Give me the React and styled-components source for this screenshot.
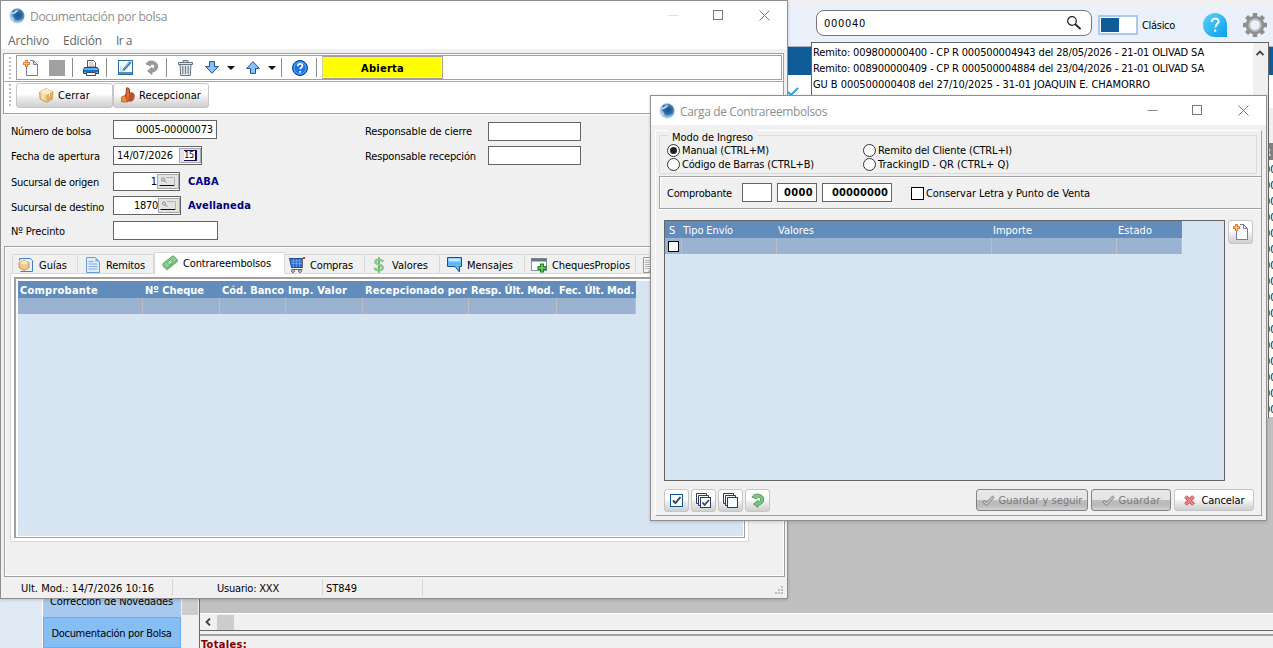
import { useLayoutEffect, useRef, useState } from 'react';
import styled, { createGlobalStyle, css } from 'styled-components';

const GlobalStyle = createGlobalStyle`
  * { box-sizing: border-box; }
  body {
    margin: 0;
    overflow: hidden;
    font-family: "DejaVu Sans Condensed", "DejaVu Sans", sans-serif;
    font-size: 11px;
    color: #000;
  }
  svg { display: block; flex: none; }
`;

const TextSpan = styled.span`
  display: inline-block;
  flex: none;
  white-space: pre;
  line-height: 16px;
  margin: 1px 0 -1px ${(p) => p.$ml || 0}px;
  font-size: ${(p) => p.$size || 11}px;
  font-weight: ${(p) => (p.$bold ? 700 : 400)};
  font-stretch: ${(p) => (p.$ui ? 'normal' : 'condensed')};
  font-family: ${(p) => (p.$ui ? '"Open Sans", sans-serif' : '"DejaVu Sans Condensed", "DejaVu Sans", sans-serif')};
  color: ${(p) => p.$color || 'inherit'};
`;

// text whose tracking is adjusted so it takes exactly w pixels
function Text({ w, children, bold, ui, size, color, ml }) {
  const ref = useRef(null);
  const [spacing, setSpacing] = useState(0);
  useLayoutEffect(() => {
    if (!w) return;
    const natural = ref.current.getBoundingClientRect().width;
    setSpacing((w - natural) / String(children).length);
  }, []);
  return (
    <TextSpan ref={ref} $bold={bold} $ui={ui} $size={size} $color={color} $ml={ml} style={{ letterSpacing: spacing }}>
      {children}
    </TextSpan>
  );
}

/* ---------- desktop behind the windows ---------- */

const Desktop = styled.div`
  position: relative;
  width: 1273px;
  height: 648px;
  overflow: hidden;
  display: flex;
  flex-direction: column;
  background: #f0f0f0;
`;

const Header = styled.div`
  height: 42px;
  margin-top: 5px;
  padding-left: 816px;
  display: flex;
  align-items: flex-start;
  background: #eaf1fb;
  border-bottom: 1px solid #a5b6c6;
  flex: none;
`;

const SearchBox = styled.div`
  width: 276px;
  height: 26px;
  margin-top: 5px;
  padding: 0 10px 0 7px;
  display: flex;
  align-items: center;
  justify-content: space-between;
  border: 1px solid #777;
  border-radius: 8px;
  background: #fff;
`;

const Toggle = styled.div`
  width: 40px;
  height: 20px;
  margin: 10px 4px 0 6px;
  padding: 1px;
  border: 2px solid #a9c9ee;
  background: #fff;
  &::before {
    content: '';
    display: block;
    width: 18px;
    height: 14px;
    background: #0f5c99;
  }
`;

const HeaderSlot = styled.div`
  margin: ${(p) => p.$mt}px 0 0 ${(p) => p.$ml || 0}px;
`;

const BlueBar = styled.div`
  height: 28px;
  flex: none;
  background: #0f5c99;
`;

const Content = styled.div`
  flex: 1;
  min-height: 0;
  display: flex;
`;

const NavGutter = styled.div`
  width: 43px;
  background: #e0eaf4;
  border-right: 1px solid #fff;
`;

const Nav = styled.div`
  width: 138px;
  display: flex;
  flex-direction: column;
  justify-content: flex-end;
  background: #a7c9f0;
`;

const NavItem = styled.div`
  height: ${(p) => (p.$active ? 31 : 32)}px;
  padding-right: 1px;
  display: flex;
  align-items: center;
  justify-content: center;
  background: ${(p) => (p.$active ? '#86bef4' : '#a7c9f0')};
  border: ${(p) => (p.$active ? '1px solid #67adf0' : '0')};
`;

const NavScroll = styled.div`
  width: 18px;
  padding: 0 1px 0 1px;
  background: #f0f0f0;
  &::before {
    content: '';
    display: block;
    height: 540px;
    background: #cdcdcd;
  }
`;

const Main = styled.div`
  flex: 1;
  min-width: 0;
  display: flex;
  flex-direction: column;
  border-left: 1px solid #696969;
  background: #f0f0f0;
`;

const BackGrid = styled.div`
  height: 538px;
  flex: none;
  background: #c0c0c0;
  display: flex;
  justify-content: flex-end;
  align-items: flex-start;
`;

const BackRows = styled.div`
  width: 120px;
  height: 342px;
  background: #fff;
`;

const BackRow = styled.div`
  height: 16px;
  line-height: 20px;
  overflow: hidden;
  display: flex;
  justify-content: flex-end;
  width: 120px;
  color: #10203c;
  & > div {
    width: 5px;
    overflow: hidden;
    text-indent: -4px;
  }
`;

const BackHead = styled(BackRow)`
  height: 17px;
  margin-top: 68px;
  background: #808080;
  color: #fff;
`;

const BackPad = styled.div`
  height: 68px;
  background: linear-gradient(#fff 33px, #f0f0f0 33px);
  margin-bottom: -68px;
`;

const BackScroll = styled.div`
  height: 18px;
  flex: none;
  display: flex;
  align-items: center;
  border-top: 1px solid #fff;
  border-bottom: 1px solid #696969;
  &::after {
    content: '';
    width: 17px;
    height: 15px;
    background: #cdcdcd;
  }
`;

const ScrollArrow = styled.div`
  width: 17px;
  padding-right: 1px;
  display: flex;
  justify-content: center;
`;

const Totals = styled.div`
  flex: 1;
  margin-top: 3px;
  border-top: 2px solid #a0a0a0;
  padding-left: 1px;
`;

const TickMark = styled.div`
  position: absolute;
  left: 788px;
  top: 75px;
  width: 23px;
  height: 21px;
  padding-top: 12px;
  background: #fff;
`;

const Dropdown = styled.div`
  position: absolute;
  left: 811px;
  top: 42px;
  width: 458px;
  height: 376px;
  display: flex;
  background: #fff;
  border: 1px solid #646464;
  border-bottom: 0;
`;

const DropdownList = styled.div`
  flex: 1;
  padding: 1px 0 0 1px;
  display: flex;
  flex-direction: column;
  align-items: flex-start;
`;

const DropdownScroll = styled.div`
  width: 15px;
  padding: 6px 3px;
  background: #f0f0f0;
`;

/* ---------- windows ---------- */

const Window = styled.div`
  position: absolute;
  isolation: isolate;
  left: ${(p) => p.$x}px;
  top: ${(p) => p.$y}px;
  width: ${(p) => p.$w}px;
  height: ${(p) => p.$h}px;
  display: flex;
  flex-direction: column;
  background: #f0f0f0;
  border: 1px solid #8f8f8f;
  box-shadow: 0 1px 3px rgba(0, 0, 0, 0.18);
`;

const TitleBar = styled.div`
  height: 29px;
  flex: none;
  display: flex;
  align-items: center;
  padding-left: 8px;
  background: #fff;
`;

const TitleButtons = styled.div`
  margin-left: auto;
  display: flex;
  align-items: center;
  gap: 34px;
  padding-right: 17px;
`;

const MenuBar = styled.div`
  height: 19px;
  flex: none;
  padding-left: 7px;
  display: flex;
  align-items: center;
  background: #fff;
`;

const Toolbars = styled.div`
  height: 61px;
  margin: 4px 3px 0 2px;
  flex: none;
  display: flex;
  flex-direction: column;
  background: #fff;
  border: 1px solid #a0a0a0;
`;

const grip = css`
  &::before {
    content: '';
    width: 2px;
    height: 22px;
    margin: 0 5px 0 5px;
    flex: none;
    background: repeating-linear-gradient(#bdbdbd 0 2px, #fff 2px 4px);
  }
`;

const ToolRow = styled.div`
  height: ${(p) => p.$h}px;
  flex: none;
  display: flex;
  align-items: center;
  ${grip}
  border-bottom: ${(p) => (p.$line ? '1px solid #a7a7af' : '0')};
`;

const ToolFrame = styled.div`
  flex: 1;
  height: 25px;
  margin-right: 1px;
  display: flex;
  align-items: center;
  border: 1px solid #a0a0a0;
`;

const Tool = styled.div`
  width: ${(p) => p.$w}px;
  margin-left: ${(p) => p.$ml}px;
  display: flex;
  justify-content: center;
  flex: none;
`;

const Sep = styled.div`
  width: 1px;
  height: 19px;
  margin-left: ${(p) => p.$ml}px;
  background: #8c8c8c;
`;

const GreyBlock = styled.div`
  width: 16px;
  height: 16px;
  background: #a0a0a0;
`;

const Status = styled.div`
  width: 121px;
  height: 23px;
  margin-left: 5px;
  display: flex;
  align-items: center;
  justify-content: center;
  background: #ff0;
  border: 1px solid #a0a0a0;
  border-left-color: #d0d0a0;
  box-shadow: inset -1px -1px 0 #fff;
`;

const Button = styled.div`
  width: ${(p) => p.$w}px;
  height: ${(p) => p.$h || 23}px;
  flex: none;
  display: flex;
  align-items: center;
  justify-content: center;
  gap: ${(p) => p.$gap || 4}px;
  border: 1px solid ${(p) => (p.$off ? '#858585' : '#c6c6c6')};
  border-radius: 3px;
  background: ${(p) =>
    p.$off
      ? 'linear-gradient(#e8e8e8, #e4e4e4 48%, #bebebe 52%, #b9b9b9 75%, #d2d2d2)'
      : 'linear-gradient(#fff, #fdfdfd 45%, #ececec 60%, #cfcfcf)'};
`;

const Form = styled.div`
  height: 132px;
  flex: none;
  display: flex;
  margin: 0 2px 0 3px;
  border-top: 1px solid #fff;
  padding: 5px 0 0 7px;
  align-items: flex-start;
`;

const FormColumn = styled.div`
  width: ${(p) => p.$w}px;
  display: flex;
  flex-direction: column;
`;

const Field = styled.div`
  height: 19px;
  margin-top: ${(p) => p.$mt}px;
  display: grid;
  grid-template-columns: ${(p) => p.$cols};
  align-items: center;
`;

const FieldLabel = styled.div`
  padding-top: ${(p) => p.$drop || 0}px;
  padding-bottom: ${(p) => p.$lift || 0}px;
  display: flex;
`;

const Input = styled.div`
  width: ${(p) => p.$w}px;
  height: 19px;
  padding: 0 3px;
  display: flex;
  align-items: center;
  justify-content: flex-end;
  border: 1px solid #646464;
  background: #fff;
  & > span { margin: 0; }
`;

const FieldValue = styled.div`
  display: flex;
  align-items: center;
  gap: 7px;
  & > span { margin-top: 0; margin-bottom: 0; }
`;

const LookupButton = styled.div`
  width: 22px;
  height: 15px;
  margin-right: -3px;
  flex: none;
  border: 1px solid #a8a8a8;
  background: #e3e3e3;
`;

const CalendarButton = styled.div`
  width: 22px;
  height: 15px;
  margin: 0 -3px 0 6px;
  flex: none;
  display: flex;
  align-items: center;
  justify-content: center;
  border: 1px solid #a8a8a8;
  background: #e3e3e3;
`;

const CalendarDay = styled.div`
  width: 13px;
  height: 11px;
  display: flex;
  align-items: center;
  justify-content: center;
  background: #fff;
  border: solid #10105a;
  border-width: 1px 2px 1px 0;
  font-size: 9px;
  line-height: 9px;
  letter-spacing: -0.3px;
`;

const NotebookPanel = styled.div`
  height: 331px;
  flex: none;
  margin: 0 2px 0 3px;
  padding: 5px 0 0 5px;
  border: 1px solid #a0a0a0;
  box-shadow: inset 1px 1px 0 #fff, inset -1px -1px 0 #fff;
  display: flex;
  flex-direction: column;
`;

const Tabs = styled.div`
  height: 22px;
  flex: none;
  padding-left: 2px;
  display: flex;
  align-items: flex-end;
  overflow: hidden;
  position: relative;
  z-index: 1;
`;

const Tab = styled.div`
  width: ${(p) => p.$w}px;
  height: ${(p) => (p.$active ? 22 : 20)}px;
  padding: ${(p) => (p.$active ? '0 0 2px' : '1px 0 0')} ${(p) => p.$pl}px;
  padding-right: 0;
  flex: none;
  display: flex;
  align-items: center;
  background: ${(p) => (p.$active ? '#fff' : '#f0f0f0')};
  border: 1px solid #d9d9d9;
  border-left-width: ${(p) => (p.$first || p.$active ? 1 : 0)}px;
  border-bottom: ${(p) => (p.$active ? '0' : '1px solid #d9d9d9')};
`;

const TabPage = styled.div`
  width: 739px;
  height: 269px;
  flex: none;
  padding: 3px;
  margin-top: -1px;
  border: 1px solid #d9d9d9;
  background: #fff;
`;

const SunkenGrid = styled.div`
  height: 261px;
  width: 731px;
  padding: 2px 1px 1px 2px;
  background: #fff;
  border: 1px solid #a0a0a0;
  border-width: 2px 1px 1px 2px;
`;

const GridFill = styled.div`
  height: 100%;
  background: #d7e4f2;
`;

const GridRow = styled.div`
  width: ${(p) => p.$w}px;
  height: ${(p) => (p.$head ? 17 : 16)}px;
  display: grid;
  grid-template-columns: ${(p) => p.$cols};
  color: #fff;
  background: ${(p) => (p.$head ? '#628cbc' : '#9ab3d1')};
`;

const Cell = styled.div`
  display: flex;
  align-items: center;
  overflow: visible;
  padding-left: ${(p) => p.$pl || 0}px;
  border-right: ${(p) => (p.$head ? '0' : '1px solid #bdbdbd')};
`;

const StatusBar = styled.div`
  flex: 1;
  display: flex;
  align-items: center;
  padding-left: 20px;
`;

const StatusCell = styled.div`
  width: ${(p) => p.$w}px;
  height: 17px;
  padding-left: ${(p) => p.$pl || 0}px;
  display: flex;
  align-items: center;
  border-right: 1px solid #d7d7d7;
`;

const SizeGrip = styled.div`
  margin: 4px 4px 0 auto;
`;

/* ---------- popup ---------- */

const PopupPanel = styled.div`
  flex: 1;
  margin: 5px 4px 4px 4px;
  border: 1px solid #a0a0a0;
  border-top-color: #fff;
  border-left-color: #fff;
  display: flex;
  flex-direction: column;
  padding-left: 3px;
`;

const Group = styled.div`
  height: 39px;
  margin: 4px 4px 0 0;
  flex: none;
  display: flex;
  flex-direction: column;
  align-items: flex-start;
  border: 1px solid #dcdcdc;
  padding-left: 7px;
`;

const GroupTitle = styled.div`
  display: flex;
  flex: none;
  height: 14px;
  margin: -7px 0 0 1px;
  padding: 0 4px;
  background: #f0f0f0;
`;

const RadioGrid = styled.div`
  display: grid;
  grid-template-columns: 196px 200px;
  grid-auto-rows: 14px;
`;

const RadioItem = styled.div`
  display: flex;
  align-items: center;
  gap: 2px;
`;

const Radio = styled.span`
  width: 13px;
  height: 13px;
  display: inline-flex;
  align-items: center;
  justify-content: center;
  border: 1px solid #333;
  border-radius: 50%;
  background: #fff;
  &::after {
    content: '';
    width: 7px;
    height: 7px;
    border-radius: 50%;
    background: ${(p) => (p.$on ? '#222' : 'transparent')};
  }
`;

const VoucherRow = styled.div`
  height: 33px;
  margin-top: 2px;
  padding-left: 7px;
  flex: none;
  display: flex;
  align-items: center;
  border: 1px solid #a0a0a0;
  border-right: 0;
  box-shadow: inset 1px 1px 0 #fff, 0 1px 0 #fff;
`;

const Gap = styled.div`
  width: ${(p) => p.$w}px;
  flex: none;
`;

const CheckBox = styled.span`
  width: ${(p) => p.$s}px;
  height: ${(p) => p.$s}px;
  flex: none;
  margin-top: ${(p) => p.$mt || 0}px;
  background: #fff;
  border: 1px solid #000;
`;

const PopupMiddle = styled.div`
  display: flex;
  align-items: flex-start;
  gap: 3px;
  margin: 11px 0 0 5px;
`;

const PopupGrid = styled.div`
  width: 561px;
  height: 261px;
  border: 1px solid #646464;
  background: #d7e4f2;
`;

const PopupFooter = styled.div`
  display: flex;
  align-items: flex-start;
  justify-content: space-between;
  margin: 8px 7px 0 5px;
`;

const ButtonGroup = styled.div`
  display: flex;
  gap: ${(p) => p.$gap}px;
`;

/* ---------- icons ---------- */

const GlobeIcon = () => (
  <svg width="16" height="16" viewBox="0 0 16 16">
    <defs>
      <radialGradient id="globe" cx="0.58" cy="0.45" r="0.6">
        <stop offset="0" stopColor="#1d5288" />
        <stop offset="0.45" stopColor="#2d6ba5" />
        <stop offset="0.75" stopColor="#86b4da" />
        <stop offset="1" stopColor="#e2edf5" />
      </radialGradient>
    </defs>
    <circle cx="8" cy="7.800" r="7.600" fill="url(#globe)" />
    <path d="M1.500 6.500C3 4 4.500 5 6 3.500S8.500 2 9.500 3c-1.500.3-2 1.800-3.500 2.500S3 5.500 1.500 6.500z" fill="#d3e4f1" />
    <path d="M5.500 12.500c2.500 1.800 5.500 1 7-1.500-.3 2.600-2.500 4.200-4.500 4.200-1.400 0-2.500-1-2.500-2.700z" fill="#8fd0ea" />
    <path d="M1.500 9c1.500-1 3 0 3.500 1.500s0 2-1 2.200C2.500 11.500 1.700 10.500 1.500 9z" fill="#a9cbe5" />
    <path d="M3 3.500l3-2-1.500 2.500z" fill="#24598f" />
  </svg>
);

const MinIcon = ({ color = '#8c8c8c' }) => (
  <svg width="11" height="11"><path d="M0.5 5.5h10" stroke={color} /></svg>
);
const MaxIcon = () => (
  <svg width="12" height="11"><rect x="0.5" y="0.5" width="9" height="9" fill="none" stroke="#777" /></svg>
);
const CloseIcon = () => (
  <svg width="11" height="11"><path d="M0.5 0.5l10 10M10.5 0.5l-10 10" stroke="#777" /></svg>
);

const NewIcon = () => (
  <svg width="16" height="16" viewBox="0 0 16 16">
    <path d="M3.500 4.500V15.500h11V4.500l-4-4H7" fill="#fff" stroke="#7c78b0" />
    <path d="M3.500 4h4V1h3v4h4v10h-11z" fill="#fff" />
    <path d="M3.500 6.500v9h11v-11M7 .5h3.500" fill="none" stroke="#7c78b0" />
    <path d="M10.500 .5v4h4z" fill="#dfe3f6" stroke="#7c78b0" />
    <path d="M3.500 0v7M0 3.500h7" stroke="#ee7f2b" strokeWidth="3" />
    <path d="M3.500 1v5M1 3.500h5" stroke="#ffc27a" />
  </svg>
);

const PrinterIcon = () => (
  <svg width="16" height="16" viewBox="0 0 16 16">
    <path d="M4.500 7V.5h6l2 2V7z" fill="#fff" stroke="#555" />
    <path d="M6 3h4M6 5h5" stroke="#aaa" />
    <path d="M1.500 7.500h13l1 2v4h-15v-4z" fill="#62b0ec" stroke="#1c4674" />
    <path d="M1 10h14v2H1z" fill="#1674c8" />
    <path d="M3.500 12.500h9v3h-9z" fill="#f2f6fa" stroke="#3a4c62" />
  </svg>
);

const EditIcon = () => (
  <svg width="15" height="15" viewBox="0 0 15 15">
    <rect x=".5" y=".5" width="14" height="14" fill="#f2faff" stroke="#2a6aa3" />
    <path d="M2 12V5l4 7z" fill="#c4e2f7" />
    <path d="M1 13h13" stroke="#2a6aa3" strokeWidth="1.500" />
    <path d="M5.500 10l7-8" stroke="#2f6ea5" strokeWidth="2.600" />
    <path d="M6 9l5.500-6.500" stroke="#8cc8f0" />
    <path d="M4 11.500l.8-2.500 1.700 1.300z" fill="#e9b04d" />
  </svg>
);

const RedoIcon = ({ fill = '#9b9b9b', stroke = '#8d8d8d' }) => (
  <svg width="14" height="15" viewBox="0 0 14 15">
    <path
      d="M1 4C2.500 1 6 .4 9 1.500c3 1 4.300 3.500 3.500 6.500-.7 2.500-3 4-5.500 4v2.500L2.500 11 7 7.500V9c1.500-.2 2.600-1.200 2.600-2.800 0-1.400-1.300-2.300-2.800-2-.9.200-1.300.8-1.300 1.800L1 4z"
      fill={fill}
      stroke={stroke}
      strokeWidth=".8"
    />
  </svg>
);

const TrashIcon = () => (
  <svg width="15" height="16" viewBox="0 0 15 16">
    <path d="M2 4.500h11l-.7 11H2.700z" fill="#e4e8eb" stroke="#67737d" />
    <path d="M.5 2.500h14v2H.5zM5 2V.6h5V2" fill="#dfe4e8" stroke="#67737d" />
    <path d="M4.800 6v8M7.500 6v8M10.200 6v8" stroke="#75818b" strokeWidth="1.200" />
  </svg>
);

const ArrowIcon = ({ up }) => (
  <svg width="14" height="13" viewBox="0 0 14 13">
    <path
      transform={up ? 'rotate(180 7 6.5)' : undefined}
      d="M4.500 .6h5v5h3.900L7 12.300.6 5.600h3.900z"
      fill="#8cc0fa"
      stroke="#234f94"
    />
  </svg>
);

const CaretIcon = () => (
  <svg width="8" height="4"><path d="M0 0h8L4 4z" fill="#111" /></svg>
);

const HelpIcon = () => (
  <svg width="16" height="16" viewBox="0 0 16 16">
    <circle cx="8" cy="8" r="7.500" fill="#1874e2" stroke="#0a3e91" />
    <circle cx="8" cy="8" r="6" fill="none" stroke="#5fb0ff" />
    <path d="M5.700 6.300c0-3.200 4.800-3.200 4.800-.5 0 1.700-2.300 1.700-2.300 3.500M8.200 11v1.800" fill="none" stroke="#fff" strokeWidth="1.700" />
  </svg>
);

const BoxIcon = () => (
  <svg width="15" height="15" viewBox="0 0 15 15">
    <path d="M7 .6l7 3-.5 7.400L7.500 14.400 1 11 .6 4z" fill="#f0cf8c" stroke="#b98f4a" strokeWidth=".8" />
    <path d="M.6 4l6.900 3L14 3.600 7 .6z" fill="#fbe9bf" />
    <path d="M7.500 7v7.200l6-3.200.5-7.200z" fill="#d9ad62" />
    <path d="M3.500 2.400l7 3.200v3M4 5.800v5.500" stroke="#fff5da" fill="none" />
  </svg>
);

const ThumbIcon = () => (
  <svg width="14" height="16" viewBox="0 0 14 16">
    <path d="M4.500 8c1.200-2 .5-4.500 1-7 1.800-.8 3 .6 3 2.500V6h3c1.500.5 2 2 1.500 4s-1 3.500-2.500 4H5z" fill="#d96b3c" stroke="#8f3414" />
    <path d="M8 8h4M8 10h4M7.500 12h4" stroke="#923a1a" />
    <path d="M.5 10L4 8.500 6.500 15H.5z" fill="#f0903c" stroke="#b3541a" strokeWidth=".7" />
  </svg>
);

const GuideIcon = () => (
  <svg width="16" height="16" viewBox="0 0 16 16">
    <path d="M1.500 3.500v-2h11l2 2v11h-12" fill="#e4eefb" stroke="#4a7cc0" />
    <path d="M6 3.500l5 2v5l-5 3-5-3v-5z" fill="#efc987" stroke="#b88440" strokeWidth=".8" />
    <path d="M1.300 5.600L6 7.800l4.700-2.200-4.700-2z" fill="#fbe6b8" />
  </svg>
);

const DocIcon = () => (
  <svg width="14" height="16" viewBox="0 0 14 16">
    <path d="M.5 .5h9l4 4v11H.5z" fill="#dcecfb" stroke="#6f9bd0" />
    <path d="M9.500 .5v4h4z" fill="#7faee0" />
    <path d="M2.500 4.500h5M2.500 7h9M2.500 9.500h9M2.500 12h9" stroke="#88acd8" />
  </svg>
);

const MoneyIcon = () => (
  <svg width="16" height="16" viewBox="0 0 16 16">
    <path d="M.5 9L11 .8 15.500 5 5 13.500z" fill="#8fce92" stroke="#4e9a58" />
    <path d="M.5 9v2L5 15.400 15.500 7V5L5 13.500z" fill="#6fb878" />
    <ellipse cx="8" cy="7.200" rx="2.500" ry="1.800" fill="#c6ecc6" transform="rotate(-38 8 7.200)" stroke="#4e9a58" strokeWidth=".7" />
  </svg>
);

const CartIcon = () => (
  <svg width="16" height="16" viewBox="0 0 16 16">
    <path d="M.5 1.500h13v9h-11z" fill="#2f6dca" stroke="#1d4e9e" />
    <path d="M2 4h11M2 6.500h11M4.500 2v8M7.500 2v8M10.500 2v8" stroke="#7fb0f0" strokeWidth=".6" />
    <path d="M13.500 11V1.500h1.500M2.500 12.500h11" stroke="#667" fill="none" />
    <path d="M14 1h2" stroke="#c33" strokeWidth="2" />
    <circle cx="4" cy="14" r="1.400" fill="#fff" stroke="#555" />
    <circle cx="11" cy="14" r="1.400" fill="#fff" stroke="#555" />
  </svg>
);

const DollarIcon = () => (
  <svg width="12" height="16" viewBox="0 0 12 16">
    <path d="M10 4.700C9.300 2.500 2.500 2 2.300 5c-.1 3 7.600 2 7.500 5.700-.1 3.300-7.400 3-8.300.1M6 .3v15.400" fill="none" stroke="#70b877" strokeWidth="2.200" />
    <path d="M10 4.700C9.300 2.500 2.500 2 2.300 5c-.1 3 7.600 2 7.500 5.700-.1 3.300-7.400 3-8.300.1" fill="none" stroke="#a4d8a6" strokeWidth="1" />
  </svg>
);

const MessageIcon = () => (
  <svg width="15" height="16" viewBox="0 0 15 16">
    <path d="M.5 .5h14v9h-2v5.500L8 9.500H.5z" fill="#66b6f4" stroke="#174f98" />
    <path d="M1.500 1.500h12v3h-12z" fill="#c5e9ff" />
  </svg>
);

const ChequeIcon = () => (
  <svg width="16" height="16" viewBox="0 0 16 16">
    <rect x=".5" y="1.500" width="15" height="12" fill="#fff" stroke="#8a949c" />
    <path d="M.5 1.500h15v3H.5z" fill="#66767f" />
    <path d="M11 6.500v9M6.500 11h9" stroke="#1e7f22" strokeWidth="4" />
    <path d="M11 7.500v7M7.500 11h7" stroke="#5dcb53" strokeWidth="2" />
  </svg>
);

const NotesIcon = () => (
  <svg width="15" height="16" viewBox="0 0 15 16">
    <path d="M.5 .5h13v15H.5z" fill="#f4f4f4" stroke="#999" />
    <path d="M2 3.500h9M2 5.500h9M2 7.500h9M2 9.500h9M2 11.500h9" stroke="#b5b5b5" />
    <path d="M6 15.500L11 7" stroke="#f0a730" strokeWidth="2" />
  </svg>
);

const LensIcon = () => (
  <svg width="14" height="14" viewBox="0 0 14 14">
    <circle cx="5" cy="5" r="4.300" fill="#fff" stroke="#222" strokeWidth="1.200" />
    <path d="M8 8l5.500 5" stroke="#222" strokeWidth="1.800" />
  </svg>
);

const LookupIcon = () => (
  <svg width="20" height="13" viewBox="0 0 20 13">
    <circle cx="5" cy="4.500" r="1.600" fill="none" stroke="#888" />
    <path d="M6 5.500l2.500 2" stroke="#888" />
    <path d="M1.500 10.500h15" stroke="#111" />
    <path d="M16.500 2.500v8M8 2.500h8" stroke="#b4b4b4" />
  </svg>
);

const BubbleHelpIcon = () => (
  <svg width="24" height="24" viewBox="0 0 24 24">
    <defs>
      <linearGradient id="bubble" x1="0" y1="0" x2="1" y2="1">
        <stop offset="0" stopColor="#5cd3f3" />
        <stop offset="1" stopColor="#0b9df0" />
      </linearGradient>
    </defs>
    <path d="M12 0a12 12 0 1 0 0 24h12V12A12 12 0 0 0 12 0z" fill="url(#bubble)" />
    <path d="M8.800 9c0-4.500 6.800-4.300 6.800-.6 0 2.600-3.300 2.700-3.300 6M12.200 16.500v2.300" fill="none" stroke="#fff" strokeWidth="2" />
  </svg>
);

const GearIcon = () => (
  <svg width="24" height="24" viewBox="0 0 24 24">
    {[0, 45, 90, 135].map((a) => (
      <path key={a} d="M12 0v24" stroke="#8f8f8f" strokeWidth="4.500" transform={`rotate(${a} 12 12)`} />
    ))}
    <circle cx="12" cy="12" r="9.300" fill="#8f8f8f" />
    <circle cx="12" cy="12" r="6.700" fill="#bdbdbd" />
    <circle cx="12" cy="12" r="4.800" fill="#eaf1fb" />
  </svg>
);

const CheckSquareIcon = () => (
  <svg width="13" height="13" viewBox="0 0 13 13">
    <rect x=".5" y=".5" width="12" height="12" fill="#f3fcff" stroke="#17548b" />
    <path d="M3 6.500l2.500 2.500 5-6" fill="none" stroke="#3a4350" strokeWidth="1.900" />
  </svg>
);

const StackIcon = ({ check }) => (
  <svg width="15" height="15" viewBox="0 0 15 15">
    <path d="M.5 10.500V.5h10v2M2.500 12.500v-10h10v2M.5 10.500h2M2.500 12.500h2" fill="none" stroke="#303a58" />
    <rect x="4.500" y="4.500" width="10" height="10" fill="#f3fcff" stroke="#303a58" />
    {check && <path d="M6.500 9.500L8.500 12 13 7" fill="none" stroke="#3a4350" strokeWidth="1.700" />}
  </svg>
);

const GreyTickIcon = () => (
  <svg width="13" height="11" viewBox="0 0 13 11">
    <path d="M1.200 6.200L4.500 9l7-7.500" fill="none" stroke="#858585" strokeWidth="3" />
    <path d="M1.800 6.600L4.500 9l6.500-7" fill="none" stroke="#ccc" strokeWidth="1.300" />
  </svg>
);

const RedCrossIcon = () => (
  <svg width="11" height="11" viewBox="0 0 11 11">
    <path d="M1.500 1.500l8 8M9.500 1.500l-8 8" stroke="#d2474e" strokeWidth="3.800" />
    <path d="M1.500 1.500l8 8M9.500 1.500l-8 8" stroke="#f28488" strokeWidth="1.800" />
  </svg>
);

const ChevronIcon = ({ left }) => (
  <svg width="8" height="8" viewBox="0 0 8 8">
    <path d={left ? 'M6 .5L2.500 4 6 7.500' : 'M.5 6L4 2.500 7.500 6'} fill="none" stroke="#404040" strokeWidth="1.800" />
  </svg>
);

/* ---------- data ---------- */

const results = [
  ['Remito: 009800000400 - CP R 000500004943 del 28/05/2026 - 21-01 OLIVAD SA', 391],
  ['Remito: 008900000409 - CP R 000500004884 del 23/04/2026 - 21-01 OLIVAD SA', 391],
  ['GU B 000500000408 del 27/10/2025 - 31-01 JOAQUIN E. CHAMORRO', 337],
];

const tabs = [
  { label: 'Guías', w: 66, pl: 5, gap: 5, tw: 28, icon: <GuideIcon /> },
  { label: 'Remitos', w: 76, pl: 8, gap: 6, tw: 39, icon: <DocIcon /> },
  { label: 'Contrareembolsos', w: 131, pl: 7, gap: 5, tw: 88, icon: <MoneyIcon />, active: true },
  { label: 'Compras', w: 80, pl: 4, gap: 5, tw: 43, icon: <CartIcon /> },
  { label: 'Valores', w: 75, pl: 8, gap: 7, tw: 36, icon: <DollarIcon /> },
  { label: 'Mensajes', w: 85, pl: 7, gap: 5, tw: 46, icon: <MessageIcon /> },
  { label: 'ChequesPropios', w: 111, pl: 6, gap: 5, tw: 78, icon: <ChequeIcon /> },
  { label: '', w: 80, pl: 7, gap: 0, icon: <NotesIcon /> },
];

const columns = [
  ['Comprobante', 78],
  ['Nº Cheque', 59],
  ['Cód. Banco', 62],
  ['Imp. Valor', 59],
  ['Recepcionado por', 102],
  ['Resp. Últ. Mod.', 83],
  ['Fec. Últ. Mod.', 75],
];
const columnSizes = '125px 77px 66px 77px 106px 88px 79px';

const popupColumns = [
  ['S', 7, 4],
  ['Tipo Envío', 50, 1],
  ['Valores', 36, 1],
  ['Importe', 39, 1],
  ['Estado', 34, 1],
];
const popupSizes = '17px 95px 215px 125px 65px';

const backRows = [0, 1, 2, 3, 4, 5, 6, 7, 8, 9, 10, 11, 12, 13, 14, 15];

function Background() {
  return (
    <>
      <Header>
        <SearchBox>
          <Text w={42}>000040</Text>
          <LensIcon />
        </SearchBox>
        <Toggle />
        <HeaderSlot $mt={12}><Text w={33}>Clásico</Text></HeaderSlot>
        <HeaderSlot $mt={8} $ml={28}><BubbleHelpIcon /></HeaderSlot>
        <HeaderSlot $mt={8} $ml={16}><GearIcon /></HeaderSlot>
      </Header>
      <BlueBar />
      <Content>
        <NavGutter />
        <Nav>
          <NavItem><Text w={123}>Corrección de Novedades</Text></NavItem>
          <NavItem $active><Text w={120}>Documentación por Bolsa</Text></NavItem>
        </Nav>
        <NavScroll />
        <Main>
          <BackGrid>
            <BackRows>
              <BackPad />
              <BackHead><div>R</div></BackHead>
              {backRows.map((r) => (
                <BackRow key={r}><div>00</div></BackRow>
              ))}
            </BackRows>
          </BackGrid>
          <BackScroll>
            <ScrollArrow><ChevronIcon left /></ScrollArrow>
          </BackScroll>
          <Totals><Text w={46} bold color="#800000">Totales:</Text></Totals>
        </Main>
      </Content>
      <TickMark>
        <svg width="12" height="10" viewBox="0 0 12 10">
          <path d="M0 5l3 3 7-7" fill="none" stroke="#1aa3e8" strokeWidth="1.800" />
        </svg>
      </TickMark>
      <Dropdown>
        <DropdownList>
          {results.map(([text, w]) => (
            <Text key={text} w={w}>{text}</Text>
          ))}
        </DropdownList>
        <DropdownScroll><ChevronIcon /></DropdownScroll>
      </Dropdown>
    </>
  );
}

function MainWindow() {
  return (
    <Window $x={0} $y={0} $w={788} $h={599}>
      <TitleBar>
        <GlobeIcon />
        <Text ui size={12} color="#8f8f8f" ml={5} w={137}>Documentación por bolsa</Text>
        <TitleButtons>
          <MinIcon color="#e2e2e2" />
          <MaxIcon />
          <CloseIcon />
        </TitleButtons>
      </TitleBar>
      <MenuBar>
        <Text ui size={12} color="#666" w={41}>Archivo</Text>
        <Text ui size={12} color="#666" w={39} ml={14}>Edición</Text>
        <Text ui size={12} color="#666" w={16} ml={14}>Ir a</Text>
      </MenuBar>
      <Toolbars>
        <ToolRow $h={28} $line>
          <ToolFrame>
            <Tool $w={16} $ml={6}><NewIcon /></Tool>
            <Tool $w={16} $ml={10}><GreyBlock /></Tool>
            <Sep $ml={7} />
            <Tool $w={16} $ml={10}><PrinterIcon /></Tool>
            <Sep $ml={7} />
            <Tool $w={15} $ml={11}><EditIcon /></Tool>
            <Tool $w={14} $ml={12}><RedoIcon /></Tool>
            <Sep $ml={7} />
            <Tool $w={15} $ml={11}><TrashIcon /></Tool>
            <Tool $w={14} $ml={12}><ArrowIcon /></Tool>
            <Tool $w={8} $ml={8}><CaretIcon /></Tool>
            <Tool $w={14} $ml={11}><ArrowIcon up /></Tool>
            <Tool $w={8} $ml={8}><CaretIcon /></Tool>
            <Sep $ml={5} />
            <Tool $w={16} $ml={10}><HelpIcon /></Tool>
            <Sep $ml={8} />
            <Status><Text bold w={43}>Abierta</Text></Status>
          </ToolFrame>
        </ToolRow>
        <ToolRow $h={26}>
          <Button $w={97} $h={25}><BoxIcon /><Text w={32}>Cerrar</Text></Button>
          <Button $w={96} $h={25}><ThumbIcon /><Text w={62}>Recepcionar</Text></Button>
        </ToolRow>
      </Toolbars>
      <Form>
        <FormColumn $w={354}>
          <Field $mt={0} $cols="102px 1fr">
            <FieldLabel $drop={3}><Text w={80}>Número de bolsa</Text></FieldLabel>
            <Input $w={104}><Text w={77}>0005-00000073</Text></Input>
          </Field>
          <Field $mt={7} $cols="102px 1fr">
            <FieldLabel $drop={1}><Text w={89}>Fecha de apertura</Text></FieldLabel>
            <Input $w={89}>
              <Text w={56}>14/07/2026</Text>
              <CalendarButton><CalendarDay>15</CalendarDay></CalendarButton>
            </Input>
          </Field>
          <Field $mt={7} $cols="102px 1fr">
            <FieldLabel $drop={1}><Text w={88}>Sucursal de origen</Text></FieldLabel>
            <FieldValue>
              <Input $w={67}><Text>1</Text><LookupButton><LookupIcon /></LookupButton></Input>
              <Text bold color="#000080" w={31} ml={1}>CABA</Text>
            </FieldValue>
          </Field>
          <Field $mt={5} $cols="102px 1fr">
            <FieldLabel $drop={3}><Text w={93}>Sucursal de destino</Text></FieldLabel>
            <FieldValue>
              <Input $w={68}><Text w={24}>1870</Text><LookupButton><LookupIcon /></LookupButton></Input>
              <Text bold color="#000080" w={63}>Avellaneda</Text>
            </FieldValue>
          </Field>
          <Field $mt={6} $cols="102px 1fr">
            <FieldLabel $drop={1}><Text w={54}>Nº Precinto</Text></FieldLabel>
            <Input $w={105} />
          </Field>
        </FormColumn>
        <FormColumn $w={240}>
          <Field $mt={2} $cols="123px 1fr">
            <FieldLabel $lift={2}><Text w={107}>Responsable de cierre</Text></FieldLabel>
            <Input $w={93} />
          </Field>
          <Field $mt={5} $cols="123px 1fr">
            <FieldLabel $drop={1}><Text w={111}>Responsable recepción</Text></FieldLabel>
            <Input $w={93} />
          </Field>
        </FormColumn>
      </Form>
      <NotebookPanel>
        <Tabs>
          {tabs.map((t, i) => (
            <Tab key={i} $w={t.w} $pl={t.pl} $active={t.active} $first={i === 0}>
              {t.icon}
              {t.label && <Text w={t.tw} ml={t.gap}>{t.label}</Text>}
            </Tab>
          ))}
        </Tabs>
        <TabPage>
          <SunkenGrid>
            <GridFill>
              <GridRow $w={618} $cols={columnSizes} $head>
                {columns.map(([name, w]) => (
                  <Cell key={name} $head $pl={2}><Text bold w={w}>{name}</Text></Cell>
                ))}
              </GridRow>
              <GridRow $w={618} $cols={columnSizes}>
                {columns.map(([name]) => <Cell key={name} />)}
              </GridRow>
            </GridFill>
          </SunkenGrid>
        </TabPage>
      </NotebookPanel>
      <StatusBar>
        <StatusCell $w={152}><Text w={133}>Ult. Mod.: 14/7/2026 10:16</Text></StatusCell>
        <StatusCell $w={150} $pl={44}><Text w={62}>Usuario: XXX</Text></StatusCell>
        <StatusCell $w={100} $pl={3}><Text w={31}>ST849</Text></StatusCell>
        <SizeGrip>
          <svg width="8" height="8" fill="#bdbdbd">
            <path d="M6 0h2v2H6zM3 3h2v2H3zM6 3h2v2H6zM0 6h2v2H0zM3 6h2v2H3zM6 6h2v2H6z" />
          </svg>
        </SizeGrip>
      </StatusBar>
    </Window>
  );
}

function Popup() {
  return (
    <Window $x={650} $y={95} $w={617} $h={426}>
      <TitleBar>
        <GlobeIcon />
        <Text ui size={12} color="#8f8f8f" ml={5} w={147}>Carga de Contrareembolsos</Text>
        <TitleButtons>
          <MinIcon />
          <MaxIcon />
          <CloseIcon />
        </TitleButtons>
      </TitleBar>
      <PopupPanel>
        <Group>
          <GroupTitle><Text w={81}>Modo de Ingreso</Text></GroupTitle>
          <RadioGrid>
            <RadioItem><Radio $on /><Text w={87}>Manual (CTRL+M)</Text></RadioItem>
            <RadioItem><Radio /><Text w={134}>Remito del Cliente (CTRL+I)</Text></RadioItem>
            <RadioItem><Radio /><Text w={132}>Código de Barras (CTRL+B)</Text></RadioItem>
            <RadioItem><Radio /><Text w={131}>TrackingID - QR (CTRL+ Q)</Text></RadioItem>
          </RadioGrid>
        </Group>
        <VoucherRow>
          <Text w={65}>Comprobante</Text>
          <Gap $w={10} />
          <Input $w={30} />
          <Gap $w={5} />
          <Input $w={40}><Text bold w={29}>0000</Text></Input>
          <Gap $w={5} />
          <Input $w={70}><Text bold w={56}>00000000</Text></Input>
          <Gap $w={19} />
          <CheckBox $s={13} $mt={2} />
          <Text w={164} ml={2}>Conservar Letra y Punto de Venta</Text>
        </VoucherRow>
        <PopupMiddle>
          <PopupGrid>
            <GridRow $w={517} $cols={popupSizes} $head>
              {popupColumns.map(([name, w, pl]) => (
                <Cell key={name} $head $pl={pl}><Text w={w}>{name}</Text></Cell>
              ))}
            </GridRow>
            <GridRow $w={517} $cols={popupSizes}>
              {popupColumns.map(([name], i) => (
                <Cell key={name} $pl={3}>{i === 0 && <CheckBox $s={11} />}</Cell>
              ))}
            </GridRow>
          </PopupGrid>
          <Button $w={25} $h={24}><NewIcon /></Button>
        </PopupMiddle>
        <PopupFooter>
          <ButtonGroup $gap={2}>
            <Button $w={25}><CheckSquareIcon /></Button>
            <Button $w={25}><StackIcon check /></Button>
            <Button $w={25}><StackIcon /></Button>
            <Button $w={25}><RedoIcon fill="#7cc583" stroke="#3f8f49" /></Button>
          </ButtonGroup>
          <ButtonGroup $gap={3}>
            <Button $w={112} $h={22} $off><GreyTickIcon /><Text w={84} color="#7c7c7c">Guardar y seguir</Text></Button>
            <Button $w={80} $h={22} $off><GreyTickIcon /><Text w={42} color="#7c7c7c">Guardar</Text></Button>
            <Button $w={80} $h={22} $gap={7}><RedCrossIcon /><Text w={43}>Cancelar</Text></Button>
          </ButtonGroup>
        </PopupFooter>
      </PopupPanel>
    </Window>
  );
}

function App() {
  return (
    <>
      <GlobalStyle />
      <Desktop>
        <Background />
        <MainWindow />
        <Popup />
      </Desktop>
    </>
  );
}

export default App;
